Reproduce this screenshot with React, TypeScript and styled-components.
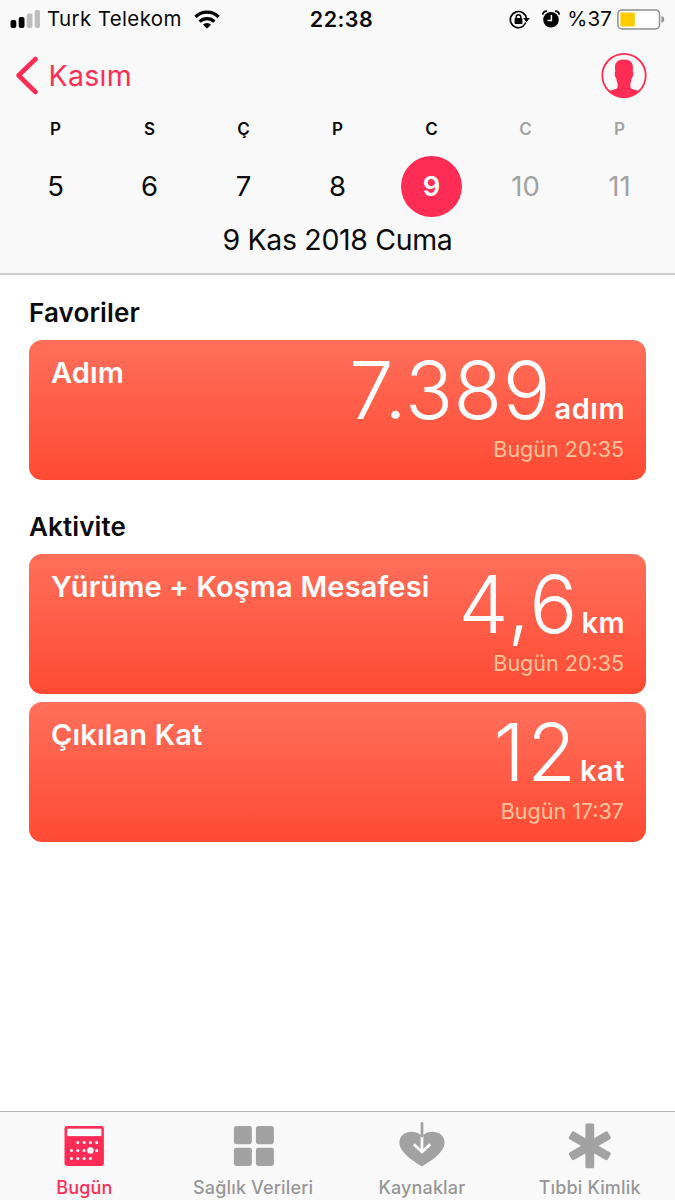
import React from 'react';
import styled, { createGlobalStyle } from 'styled-components';

const PINK = '#ff2d55';
const GREY = '#a2a2a2';

const GlobalStyle = createGlobalStyle`
  * { box-sizing: border-box; }
  body {
    margin: 0;
    background: #fff;
    color: #0a0a0a;
    font-family: Inter, "Liberation Sans", sans-serif;
  }
  svg { display: block; flex: none; }
`;

const Screen = styled.div`
  display: flex;
  flex-direction: column;
  width: 675px;
  height: 1200px;
  overflow: hidden;
`;

const Header = styled.header`
  flex: none;
  height: 275px;
  background: #f9f9f9;
  border-bottom: 2px solid #cdcdcd;
`;

const StatusBar = styled.div`
  display: grid;
  grid-template-columns: 1fr auto 1fr;
  align-items: center;
  height: 37px;
  padding: 0 10px;
  font-size: 20.5px;
  line-height: 38px;
`;

const StatusGroup = styled.div<{ $end?: boolean }>`
  display: flex;
  align-items: center;
  justify-content: ${p => (p.$end ? 'flex-end' : 'flex-start')};
`;

const Carrier = styled.span`
  margin: 0 12px 0 7px;
  letter-spacing: 0.36px;
`;

const Clock = styled.span`
  margin-left: 8px;
  font-size: 21.5px;
  font-weight: 600;
  letter-spacing: 0.45px;
`;

const StatusIcons = styled.span`
  display: flex;
  align-items: center;
  gap: 12px;
`;

const Percent = styled.span`
  margin: 0 5px 0 7px;
  letter-spacing: 0.1px;
`;

const NavBar = styled.nav`
  display: flex;
  align-items: center;
  justify-content: space-between;
  height: 77px;
  padding: 0 28px 0 15px;
`;

const BackLink = styled.a`
  display: flex;
  align-items: center;
  gap: 9.5px;
  color: ${PINK};
  font-size: 28.5px;
  line-height: 40px;
  letter-spacing: 0.3px;
`;

const Week = styled.div`
  display: grid;
  grid-template-columns: repeat(7, 94px);
  justify-content: center;
  height: 103px;
`;

const Day = styled.div<{ $muted?: boolean }>`
  display: flex;
  flex-direction: column;
  align-items: center;
  color: ${p => (p.$muted ? GREY : 'inherit')};
`;

const DayName = styled.span`
  font-size: 17px;
  font-weight: 600;
  line-height: 31px;
  margin-bottom: 11px;
`;

const DayNumber = styled.span<{ $selected?: boolean }>`
  width: 61px;
  height: 61px;
  border-radius: 50%;
  font-size: 27.5px;
  line-height: 61px;
  text-align: center;
  background: ${p => (p.$selected ? PINK : 'transparent')};
  color: ${p => (p.$selected ? '#fff' : 'inherit')};
  font-weight: ${p => (p.$selected ? 600 : 400)};
`;

const FullDate = styled.div`
  text-align: center;
  font-size: 28.5px;
  line-height: 46px;
  letter-spacing: -0.35px;
`;

const Content = styled.main`
  flex: 1;
  padding: 0 29px;
`;

const Section = styled.section<{ $first?: boolean }>`
  padding-top: ${p => (p.$first ? 10 : 19)}px;
`;

const SectionTitle = styled.h2`
  margin: 0;
  font-size: 26px;
  font-weight: 600;
  letter-spacing: 0.12px;
  line-height: 55px;
`;

const Cards = styled.div`
  display: flex;
  flex-direction: column;
  gap: 7.5px;
`;

const Card = styled.article`
  display: flex;
  justify-content: space-between;
  height: 140px;
  padding: 0 22px;
  border-radius: 13px;
  background: linear-gradient(#ff6f5b, #ff4a33);
  color: #fff;
`;

const CardTitle = styled.h3`
  margin: 0;
  font-size: 29px;
  font-weight: 600;
  letter-spacing: 0.17px;
  line-height: 65px;
`;

const Reading = styled.div`
  display: flex;
  flex-direction: column;
  align-items: flex-end;
`;

const Amount = styled.div`
  display: flex;
  align-items: baseline;
  height: 93px;
  line-height: 101px;
`;

const Value = styled.span<{ $spacing: number }>`
  font-size: 79.5px;
  font-weight: 300;
  letter-spacing: ${p => p.$spacing}px;
  margin-right: ${p => 4 - p.$spacing}px;
`;

const Unit = styled.span`
  font-size: 29px;
  font-weight: 600;
  letter-spacing: 0.5px;
  margin-right: -1px;
`;

const When = styled.div`
  font-size: 21.5px;
  line-height: 33px;
  color: #ffc49b;
`;

const TabBar = styled.footer`
  flex: none;
  display: grid;
  grid-template-columns: repeat(4, 1fr);
  height: 89px;
  border-top: 1px solid #b4b4b4;
  background: #f9f9f9;
`;

const Tab = styled.div<{ $active?: boolean }>`
  display: flex;
  flex-direction: column;
  align-items: center;
  color: ${p => (p.$active ? PINK : '#979797')};
  font-size: 18px;
  font-weight: 500;
  letter-spacing: 0.15px;
  line-height: 24px;

  &:last-child { padding-right: 2px; }
`;

const TabIcon = styled.span`
  display: block;
  height: 64px;
  padding-top: 9px;
`;

const Signal = () => (
  <svg width="30" height="18" viewBox="0 0 30 18">
    <rect x="0.5" y="10" width="5.8" height="8" rx="2" fill="#000" />
    <rect x="8.7" y="7" width="5.8" height="11" rx="2" fill="#000" />
    <rect x="16.7" y="3.5" width="5.8" height="14.5" rx="2" fill="#bdbdbd" />
    <rect x="24.7" y="0" width="5.3" height="18" rx="2" fill="#bdbdbd" />
  </svg>
);

const Wifi = () => (
  <svg width="26" height="19" viewBox="0 0 26 19" fill="none" stroke="#000" strokeWidth="3.2">
    <path d="M1.4 7 A16.4 16.4 0 0 1 24.6 7" />
    <path d="M5.6 11.6 A10.6 10.6 0 0 1 20.4 11.6" />
    <path d="M13 18.6 L8.9 14.8 A5.8 5.8 0 0 1 17.1 14.8 Z" fill="#000" stroke="none" />
  </svg>
);

const RotationLock = () => (
  <svg width="21" height="19" viewBox="0 0 21 19">
    <path d="M13.2 16.8 A8.1 8.1 0 1 1 17.4 8.2" fill="none" stroke="#000" strokeWidth="1.7" />
    <path d="M14.2 8 H20.8 L17.5 12.3 Z" />
    <path d="M16.7 12.6 A8.1 8.1 0 0 1 13.2 16.8" fill="none" stroke="#000" strokeWidth="1.5" />
    <rect x="5.6" y="8.1" width="7.8" height="5.9" rx="0.8" />
    <path d="M7.2 8.6 V7 A2.3 2.3 0 0 1 11.8 7 V8.6" fill="none" stroke="#000" strokeWidth="1.4" />
  </svg>
);

const Alarm = () => (
  <svg width="18" height="18" viewBox="0 0 18 18">
    <circle cx="9" cy="9.8" r="7.8" />
    <path d="M0.8 4.6 A4 4 0 0 1 5 1.1 M13 1.1 A4 4 0 0 1 17.2 4.6" fill="none" stroke="#000" strokeWidth="1.8" />
    <path d="M9.4 5 V10.4 H5.6" fill="none" stroke="#fff" strokeWidth="1.5" />
  </svg>
);

const Battery = () => (
  <svg width="48" height="21" viewBox="0 0 48 21">
    <rect x="0.9" y="0.9" width="41.6" height="19" rx="4" fill="#fff" stroke="#8e8e93" strokeWidth="1.5" />
    <rect x="3.4" y="3.4" width="14.4" height="14" rx="1" fill="#ffcc00" />
    <path d="M44.5 6.8 Q47.2 8 47.2 10.4 Q47.2 12.8 44.5 14 Z" fill="#8e8e93" />
  </svg>
);

const BackChevron = () => (
  <svg width="24" height="39" viewBox="0 0 24 39" fill="none" stroke={PINK} strokeWidth="4.6" strokeLinecap="round" strokeLinejoin="round">
    <path d="M20.5 3 L3.6 19.5 L20.5 36" />
  </svg>
);

const Profile = () => (
  <svg width="46" height="46" viewBox="0 0 46 46">
    <clipPath id="avatar"><circle cx="23" cy="22.6" r="22" /></clipPath>
    <path
      clipPath="url(#avatar)"
      fill={PINK}
      d="M14.3 18.5 C13 10 15.5 6.5 23 6.4 C30.5 6.5 32.6 10 31.8 18.5 C32.8 19.5 32.2 24.5 30.8 25 C30.6 27.5 30 29 29.4 30.4 V34 C29.8 37 36.8 36.8 39.8 38.6 L40 46 H6 L6.2 38.6 C9.2 36.8 16.2 37 16.6 34 V30.4 C16 29 15.4 27.5 15.2 25 C13.8 24.5 13.3 19.5 14.3 18.5 Z"
    />
    <circle cx="23" cy="22.6" r="21.7" fill="none" stroke={PINK} strokeWidth="1.8" />
  </svg>
);

const CalendarIcon = () => {
  const dots = [[13.3, 16.8], [19.6, 16.8], [25.9, 16.8], [32.2, 16.8], [7, 24.8], [13.3, 24.8], [19.6, 24.8], [32.2, 24.8], [7, 32.8], [13.3, 32.8], [19.6, 32.8], [25.9, 32.8]];
  return (
    <svg width="40" height="46" viewBox="-0.5 -4.7 40 46">
      <rect x="0" y="0.3" width="39.4" height="40" rx="2.4" fill={PINK} />
      <rect x="2.7" y="3" width="34.2" height="7.4" fill="#fff" />
      {dots.map(([x, y]) => <circle key={`${x}-${y}`} cx={x} cy={y} r="1.5" fill="#fff" />)}
      <circle cx="25.9" cy="24.8" r="3.2" fill="#fff" />
    </svg>
  );
};

const GridIcon = () => (
  <svg width="41" height="46" viewBox="-0.9 -4.7 41 46" fill={GREY}>
    <rect x="0" y="0.3" width="18" height="18.2" rx="2.4" />
    <rect x="22" y="0.3" width="18" height="18.2" rx="2.4" />
    <rect x="0" y="22.1" width="18" height="18.2" rx="2.4" />
    <rect x="22" y="22.1" width="18" height="18.2" rx="2.4" />
  </svg>
);

const SourcesIcon = () => (
  <svg width="46" height="46" viewBox="0 0 46 46">
    <path fill={GREY} d="M23 45.4 C15 41 0.4 31.5 0.4 21.6 C0.4 9.5 16.5 7.6 23 15 C29.5 7.6 45.6 9.5 45.6 21.6 C45.6 31.5 31 41 23 45.4 Z" />
    <path d="M23 14 V30.5 M14.8 23.2 L23 31 L31.2 23.2" fill="none" stroke="#fff" strokeWidth="2.7" />
    <path d="M23 2.4 V15" stroke={GREY} strokeWidth="2.8" strokeLinecap="round" />
  </svg>
);

const MedicalIcon = () => (
  <svg width="46" height="48" viewBox="0.2 -1.8 46 48" fill={GREY}>
    {[0, 60, 120].map(a => (
      <rect key={a} x="18.6" y="0.6" width="8.8" height="44.8" rx="1.5" transform={`rotate(${a} 23 23)`} />
    ))}
  </svg>
);

const days = [
  { name: 'P', number: 5 }, { name: 'S', number: 6 }, { name: 'Ç', number: 7 }, { name: 'P', number: 8 },
  { name: 'C', number: 9, selected: true }, { name: 'C', number: 10, muted: true }, { name: 'P', number: 11, muted: true },
];

type Metric = { title: string; value: string; unit: string; when: string; spacing: number };

const favorites: Metric[] = [{ title: 'Adım', value: '7.389', unit: 'adım', when: 'Bugün 20:35', spacing: 0.5 }];
const activity: Metric[] = [
  { title: 'Yürüme + Koşma Mesafesi', value: '4,6', unit: 'km', when: 'Bugün 20:35', spacing: 1.6 },
  { title: 'Çıkılan Kat', value: '12', unit: 'kat', when: 'Bugün 17:37', spacing: 2.4 },
];

const MetricCard = ({ title, value, unit, when, spacing }: Metric) => (
  <Card>
    <CardTitle>{title}</CardTitle>
    <Reading>
      <Amount>
        <Value $spacing={spacing}>{value}</Value>
        <Unit>{unit}</Unit>
      </Amount>
      <When>{when}</When>
    </Reading>
  </Card>
);

export default function App() {
  return (
    <Screen>
      <GlobalStyle />
      <Header>
        <StatusBar>
          <StatusGroup>
            <Signal />
            <Carrier>Turk Telekom</Carrier>
            <Wifi />
          </StatusGroup>
          <Clock>22:38</Clock>
          <StatusGroup $end>
            <StatusIcons>
              <RotationLock />
              <Alarm />
            </StatusIcons>
            <Percent>%37</Percent>
            <Battery />
          </StatusGroup>
        </StatusBar>
        <NavBar>
          <BackLink><BackChevron />Kasım</BackLink>
          <Profile />
        </NavBar>
        <Week>
          {days.map(d => (
            <Day key={d.number} $muted={d.muted}>
              <DayName>{d.name}</DayName>
              <DayNumber $selected={d.selected}>{d.number}</DayNumber>
            </Day>
          ))}
        </Week>
        <FullDate>9 Kas 2018 Cuma</FullDate>
      </Header>
      <Content>
        <Section $first>
          <SectionTitle>Favoriler</SectionTitle>
          <Cards>{favorites.map(m => <MetricCard key={m.title} {...m} />)}</Cards>
        </Section>
        <Section>
          <SectionTitle>Aktivite</SectionTitle>
          <Cards>{activity.map(m => <MetricCard key={m.title} {...m} />)}</Cards>
        </Section>
      </Content>
      <TabBar>
        <Tab $active><TabIcon><CalendarIcon /></TabIcon>Bugün</Tab>
        <Tab><TabIcon><GridIcon /></TabIcon>Sağlık Verileri</Tab>
        <Tab><TabIcon><SourcesIcon /></TabIcon>Kaynaklar</Tab>
        <Tab><TabIcon><MedicalIcon /></TabIcon>Tıbbi Kimlik</Tab>
      </TabBar>
    </Screen>
  );
}
